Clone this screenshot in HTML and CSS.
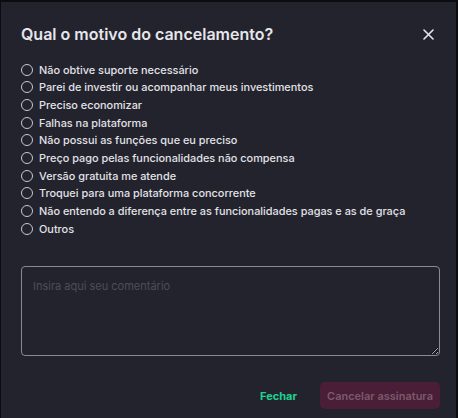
FILE: index.html
```html
<!DOCTYPE html>
<html lang="pt-BR">
<head>
  <meta charset="UTF-8">
  <meta name="viewport" content="width=device-width, initial-scale=1.0">
  <title>Cancelamento</title>
  <link rel="stylesheet" href="styles.css">
</head>
<body>
  <div class="modal">
    <div class="modal-header">
      <h1>Qual o motivo do cancelamento?</h1>
      <button class="close-btn" aria-label="Fechar">
        <svg width="11" height="11" viewBox="0 0 11 11"><path d="M1 1L10 10M10 1L1 10" stroke="#e6e6ea" stroke-width="1.6" stroke-linecap="round"/></svg>
      </button>
    </div>

    <ul class="reasons">
      <li><span class="radio"></span>Não obtive suporte necessário</li>
      <li><span class="radio"></span>Parei de investir ou acompanhar meus investimentos</li>
      <li><span class="radio"></span>Preciso economizar</li>
      <li><span class="radio"></span>Falhas na plataforma</li>
      <li><span class="radio"></span>Não possui as funções que eu preciso</li>
      <li><span class="radio"></span>Preço pago pelas funcionalidades não compensa</li>
      <li><span class="radio"></span>Versão gratuita me atende</li>
      <li><span class="radio"></span>Troquei para uma plataforma concorrente</li>
      <li><span class="radio"></span>Não entendo a diferença entre as funcionalidades pagas e as de graça</li>
      <li><span class="radio"></span>Outros</li>
    </ul>

    <textarea class="comment" placeholder="Insira aqui seu comentário"></textarea>

    <div class="actions">
      <button class="btn-link">Fechar</button>
      <button class="btn-cancel" disabled>Cancelar assinatura</button>
    </div>
  </div>
</body>
</html>
```

FILE: styles.css
```css
html, body {
  margin: 0;
  height: 100%;
  background: #0c0c10;
}
body {
  font-family: Inter, "Noto Sans", sans-serif;
  padding: 2px 2px 0 1px;
  box-sizing: border-box;
}
.modal {
  background: #23232e;
  height: 416px;
  box-sizing: border-box;
  padding: 22px 16px 0 20px;
  color: #e6e6ea;
}
.modal-header {
  display: flex;
  justify-content: space-between;
  align-items: center;
  height: 20px;
}
.modal-header h1 {
  margin: 0;
  font-size: 16px;
  font-weight: 600;
}
.close-btn {
  background: none;
  border: none;
  padding: 0;
  margin-right: 6px;
  display: flex;
}
.reasons {
  list-style: none;
  margin: 17px 0 0 0;
  padding: 0;
}
.reasons li {
  display: flex;
  align-items: center;
  height: 17.65px;
  font-size: 10.9px;
  font-weight: 500;
  color: #e2e2e6;
}
.radio {
  width: 10px;
  height: 10px;
  border: 1px solid #c8c8cc;
  border-radius: 50%;
  margin-right: 6px;
  flex-shrink: 0;
}
.comment {
  display: block;
  width: 419px;
  height: 90px;
  margin-top: 29px;
  box-sizing: border-box;
  background: #23232e;
  border: 1.5px solid #8a8a90;
  border-radius: 4px;
  padding: 12px 11px;
  font-family: inherit;
  font-size: 11px;
  color: #e6e6ea;
  resize: vertical;
}
.comment::placeholder {
  color: #4e4e58;
}
.actions {
  display: flex;
  justify-content: flex-end;
  align-items: center;
  gap: 23px;
  margin-top: 26px;
}
.btn-link {
  background: none;
  border: none;
  color: #1ed38e;
  font-family: inherit;
  font-weight: 700;
  font-size: 11px;
  padding: 0;
}
.btn-cancel {
  background: #4a1e36;
  color: #7a5a6c;
  border: none;
  border-radius: 5px;
  width: 120px;
  height: 27px;
  font-family: inherit;
  font-size: 11px;
  font-weight: 600;
  padding: 0;
}
```
